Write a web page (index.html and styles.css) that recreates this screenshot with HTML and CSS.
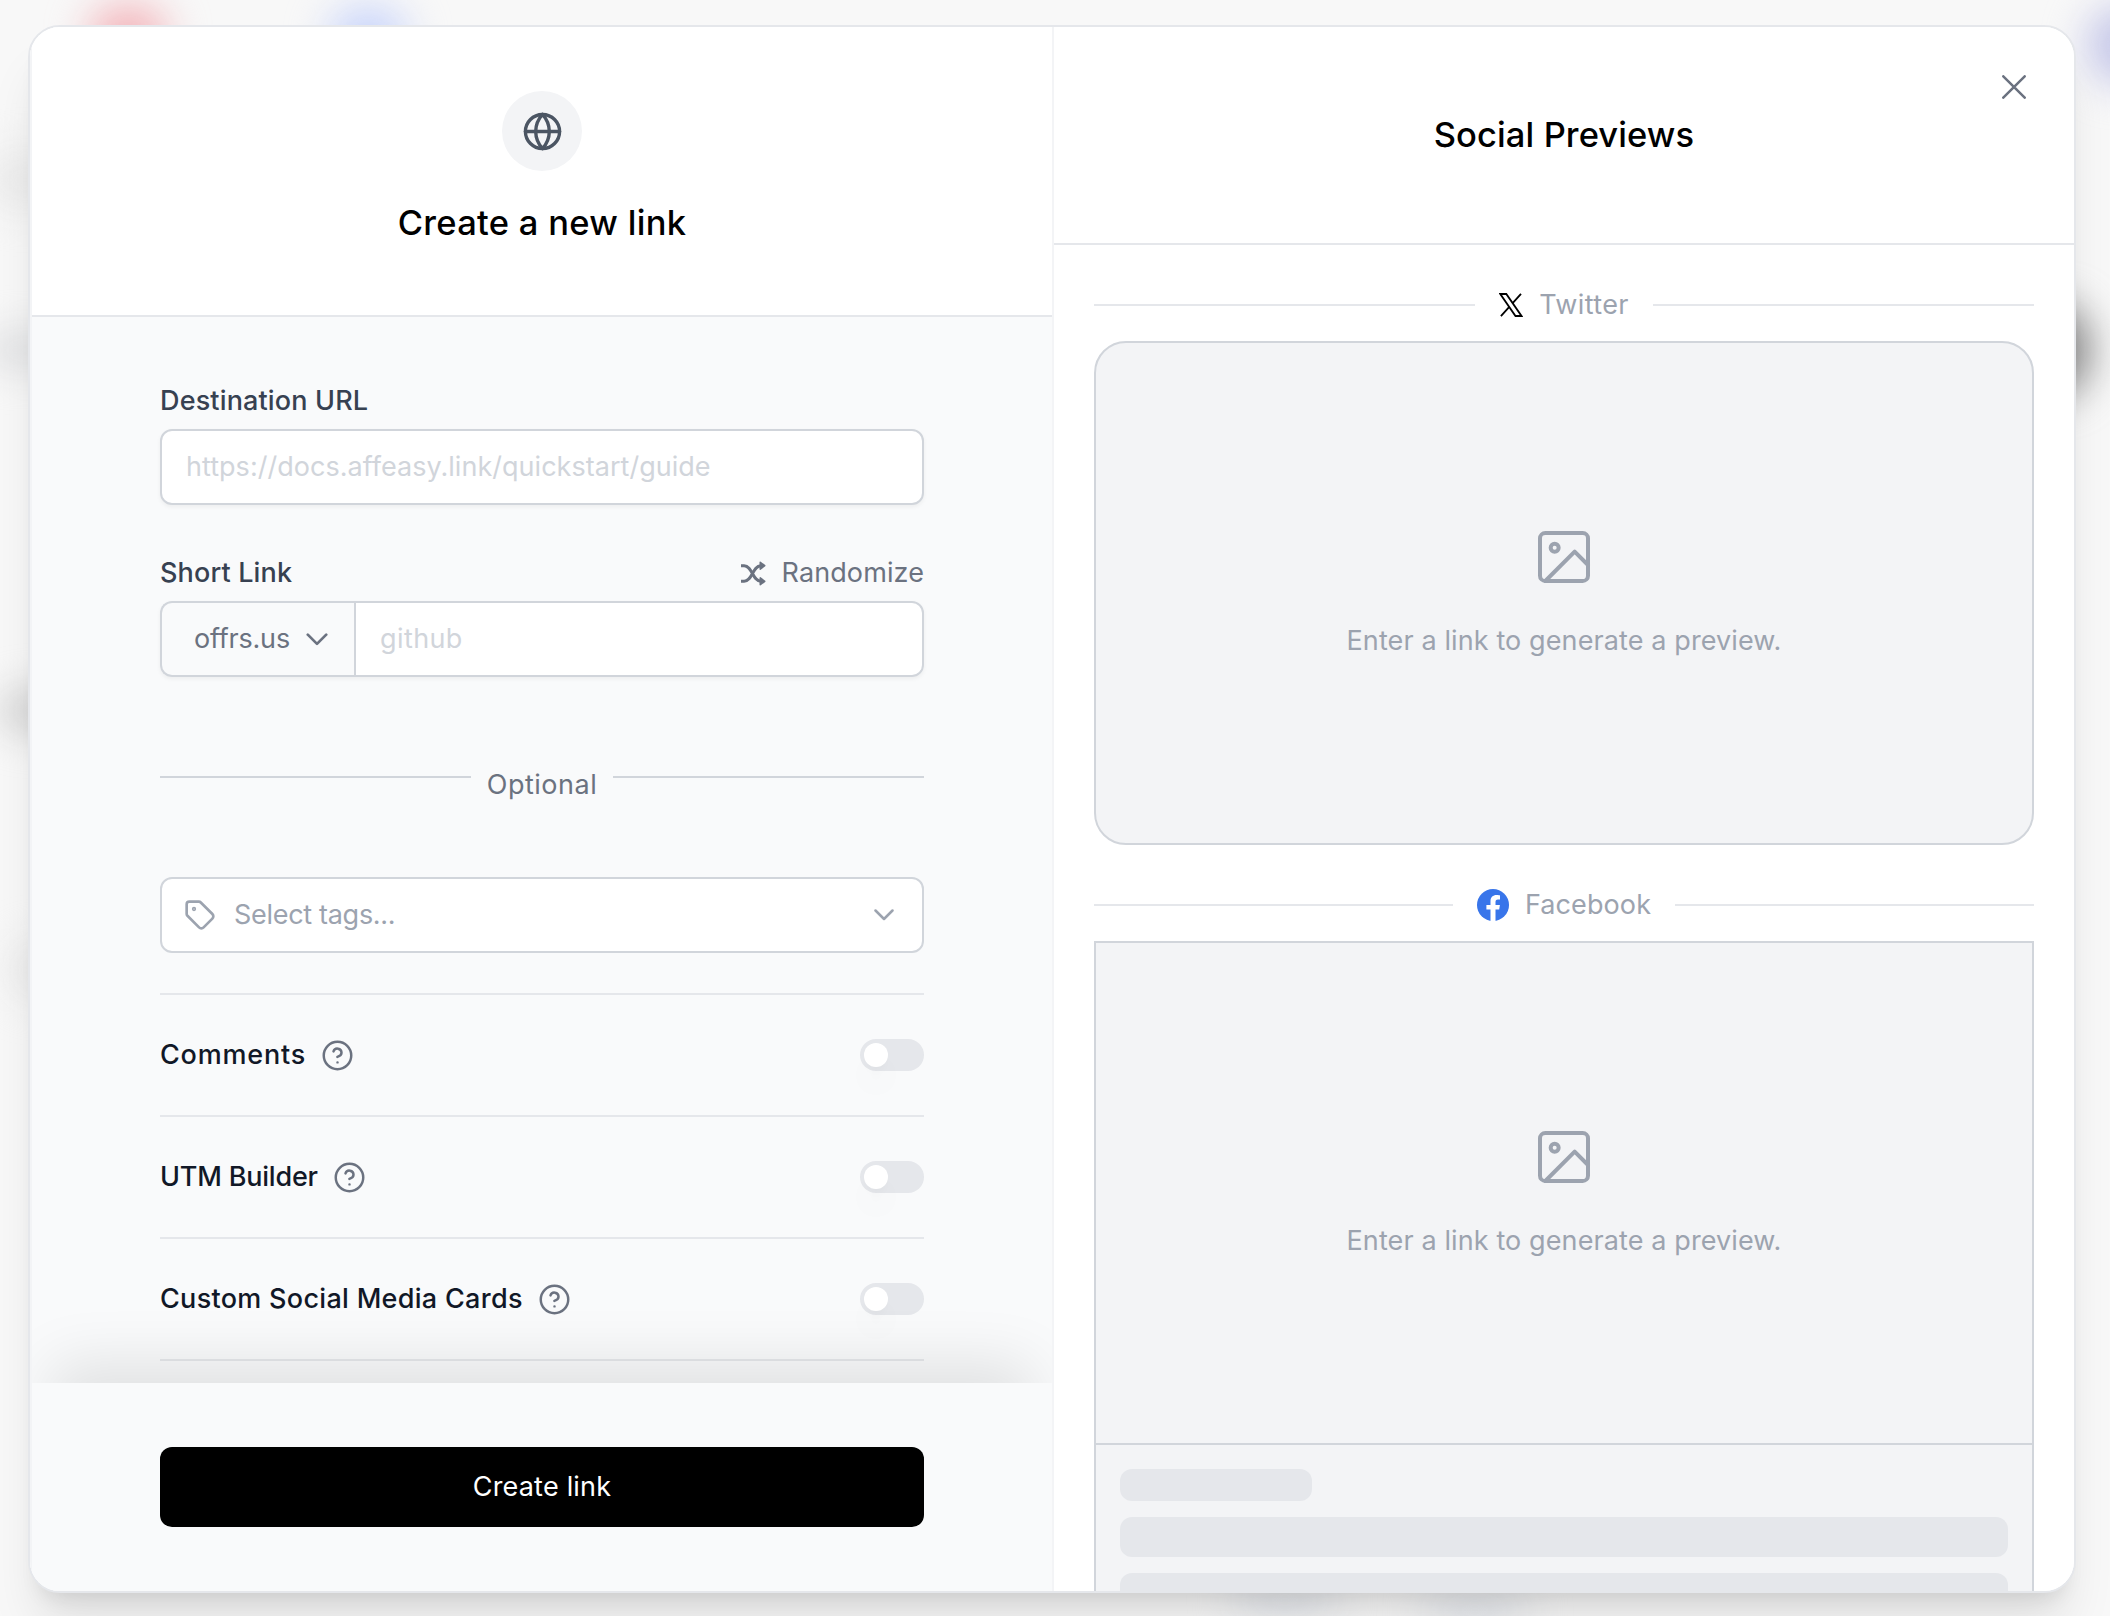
FILE: index.html
```html
<!DOCTYPE html>
<html lang="en">
<head>
<meta charset="utf-8">
<title>Create a new link</title>
<link rel="stylesheet" href="styles.css">
</head>
<body>
<div class="backdrop" aria-hidden="true">
  <i class="blob blob-red"></i><i class="blob blob-blue"></i><i class="blob blob-gray-1"></i><i class="blob blob-gray-2"></i><i class="blob blob-gray-3"></i><i class="blob blob-gray-4"></i><i class="blob blob-lavender"></i><i class="blob blob-dark"></i><i class="blob blob-slate-1"></i><i class="blob blob-slate-2"></i>
</div>
<main class="modal">
  <section class="pane form-pane">
    <header class="form-header">
      <div class="logo"><svg class="icon-globe" viewBox="0 0 24 24"><circle cx="12" cy="12" r="10"/><path d="M2 12h20M12 2a15.3 15.3 0 0 1 4 10 15.3 15.3 0 0 1-4 10 15.3 15.3 0 0 1-4-10 15.3 15.3 0 0 1 4-10z"/></svg></div>
      <h1 class="title title-create">Create a new link</h1>
    </header>
    <div class="form-body">
      <div class="field">
        <div class="label-row"><label class="label label-url" for="url">Destination URL</label></div>
        <input class="input" id="url" type="text" placeholder="https://docs.affeasy.link/quickstart/guide">
      </div>
      <div class="field">
        <div class="label-row">
          <label class="label label-short" for="key">Short Link</label>
          <button class="randomize"><svg class="icon-shuffle" viewBox="0 0 24 24"><path d="M0 4.500h3C11 4.500 11 19.500 19 19.500M0 19.500h3C11 19.500 11 4.500 19 4.500"/><path class="arrow" d="M18.500 1.200v6.600l4.300-3.300zM18.500 16.200v6.600l4.300-3.300z"/></svg><span>Randomize</span></button>
        </div>
        <div class="input-group">
          <button class="domain"><span class="domain-name">offrs.us</span><svg class="icon-chevron" viewBox="0 0 20 12"><path d="M1.500 1.500 10 10l8.500-8.500"/></svg></button>
          <input class="input input-key" id="key" type="text" placeholder="github">
        </div>
      </div>
      <div class="divider"><span class="divider-text">Optional</span></div>
      <button class="select">
        <svg class="icon-tag" viewBox="0 0 24 24"><path d="M12.586 2.586A2 2 0 0 0 11.172 2H4a2 2 0 0 0-2 2v7.172a2 2 0 0 0 .586 1.414l8.704 8.704a2.426 2.426 0 0 0 3.420 0l6.580-6.580a2.426 2.426 0 0 0 0-3.420z"/><circle cx="7.500" cy="7.500" r=".6"/></svg>
        <span class="select-text">Select tags...</span>
        <svg class="icon-chevron-sm" viewBox="0 0 20 12"><path d="M1.500 1.500 10 10l8.500-8.500"/></svg>
      </button>
      <ul class="options">
        <li class="option"><span class="option-name opt-comments">Comments</span><svg class="icon-help" viewBox="0 0 24 24"><circle cx="12" cy="12" r="10"/><path d="M9.090 9a3 3 0 0 1 5.830 1c0 2-3 3-3 3M12 17h.01"/></svg><span class="switch"><i class="knob"></i></span></li>
        <li class="option"><span class="option-name opt-utm">UTM Builder</span><svg class="icon-help" viewBox="0 0 24 24"><circle cx="12" cy="12" r="10"/><path d="M9.090 9a3 3 0 0 1 5.830 1c0 2-3 3-3 3M12 17h.01"/></svg><span class="switch"><i class="knob"></i></span></li>
        <li class="option"><span class="option-name opt-cards">Custom Social Media Cards</span><svg class="icon-help" viewBox="0 0 24 24"><circle cx="12" cy="12" r="10"/><path d="M9.090 9a3 3 0 0 1 5.830 1c0 2-3 3-3 3M12 17h.01"/></svg><span class="switch"><i class="knob"></i></span></li>
        <li class="option"></li>
      </ul>
    </div>
    <footer class="form-footer"><button class="submit">Create link</button></footer>
  </section>
  <section class="pane preview-pane">
    <header class="preview-header"><h2 class="title title-social">Social Previews</h2></header>
    <div class="preview-body">
      <div class="network"><span class="network-name"><svg class="icon-x" viewBox="0 0 24 24"><path d="M1.300 1h6l15.200 22h-6zM22 .8l-8.800 9.900M10.500 13.600 1.900 23.200"/></svg><span class="name-twitter">Twitter</span></span></div>
      <div class="card card-twitter">
        <svg class="icon-image" viewBox="0 0 24 24"><rect x="3" y="3" width="18" height="18" rx="2"/><circle cx="8.500" cy="8.500" r="1.500"/><path d="M21 15l-5-5L5 21"/></svg>
        <p class="hint">Enter a link to generate a preview.</p>
      </div>
      <div class="network network-next"><span class="network-name"><svg class="icon-facebook" viewBox="0 0 32 32"><circle cx="16" cy="16" r="16"/><path d="M13.500 32V20.600H9.400V16h4.100v-3.600c0-4.100 2.400-6.300 6.100-6.300 1.800 0 3.400.3 3.400.3v4h-2c-2 0-2.500 1.200-2.500 2.500V16h4.400l-.7 4.600h-3.700V32z"/></svg><span class="name-facebook">Facebook</span></span></div>
      <div class="card card-facebook">
        <svg class="icon-image" viewBox="0 0 24 24"><rect x="3" y="3" width="18" height="18" rx="2"/><circle cx="8.500" cy="8.500" r="1.500"/><path d="M21 15l-5-5L5 21"/></svg>
        <p class="hint">Enter a link to generate a preview.</p>
      </div>
      <div class="skeleton"><i class="bar bar-short"></i><i class="bar"></i><i class="bar"></i></div>
    </div>
  </section>
  <button class="close" aria-label="Close"><svg class="icon-close" viewBox="0 0 24 24"><path d="M1.300 1.300l21.400 21.400M22.700 1.300 1.300 22.700"/></svg></button>
</main>
</body>
</html>
```
FILE: styles.css
```css
* { box-sizing: border-box; margin: 0; padding: 0; }
body {
  width: 2110px; height: 1616px; padding: 25px 34px 23px 28px; overflow: hidden;
  background: #f8f8f8; color: #6b7280;
  font: 400 27px/40px Inter, "Liberation Sans", sans-serif;
}
button, input { font: inherit; letter-spacing: inherit; color: inherit; border: 0; background: none; outline: 0; }
svg { display: block; flex: none; fill: none; stroke: currentColor; stroke-width: 2; stroke-linecap: round; stroke-linejoin: round; }

/* Page content showing through the blurred overlay */
.backdrop { position: absolute; inset: 0; overflow: hidden; }
.blob { position: absolute; border-radius: 50%; filter: blur(20px); }
.blob-red { left: 88px; top: 4px; width: 80px; height: 66px; background: #f3b4ba; }
.blob-blue { left: 328px; top: 6px; width: 80px; height: 66px; background: #c8d4fb; }
.blob-gray-1 { left: -20px; top: 150px; width: 90px; height: 60px; background: #ebebeb; }
.blob-gray-2 { left: -20px; top: 332px; width: 90px; height: 36px; background: #dcdddf; }
.blob-gray-3 { left: -5px; top: 690px; width: 90px; height: 42px; background: #cfcfcf; }
.blob-gray-4 { left: 10px; top: 940px; width: 60px; height: 60px; background: #e8e8e8; }
.blob-lavender { left: 2086px; top: 5px; width: 80px; height: 80px; background: #c4c6e8; }
.blob-dark { left: 2016px; top: 304px; width: 74px; height: 92px; background: #858585; }
.blob-slate-1 { left: 1230px; top: 1580px; width: 110px; height: 40px; background: #e2e5ea; }
.blob-slate-2 { left: 1420px; top: 1590px; width: 110px; height: 40px; background: #e2e5ea; }

.modal {
  position: relative; width: 2048px; height: 1568px; display: grid; grid-template-columns: 1fr 1fr;
  overflow: hidden; border: 2px solid #e5e7eb; border-radius: 32px; background: #fff;
  box-shadow: 0 40px 50px -10px rgba(0,0,0,.1), 0 16px 20px -12px rgba(0,0,0,.1);
}
.pane { display: flex; flex-direction: column; min-width: 0; min-height: 0; height: 1564px; border-left: 2px solid #f3f4f6; overflow: hidden; }
.title { font-size: 34.5px; line-height: 56px; font-weight: 500; color: #000; }
.title-create { letter-spacing: .3px; }
.title-social { letter-spacing: .1px; }

.form-pane { background: #f9fafb; }
.form-header { flex: none; height: 290px; padding-top: 64px; display: flex; flex-direction: column; align-items: center; gap: 24px; background: #fff; border-bottom: 2px solid #e5e7eb; }
.logo { width: 80px; height: 80px; display: grid; place-items: center; border-radius: 50%; background: #f3f4f6; color: #4b5563; }
.icon-globe { width: 41px; height: 41px; }
.form-body { flex: 1; min-height: 0; overflow: hidden; padding: 64px 128px 0; }
.field { margin-bottom: 48px; }
.label-row { display: flex; align-items: center; justify-content: space-between; height: 40px; margin-bottom: 8px; }
.label { font-weight: 500; color: #374151; letter-spacing: .15px; }
.randomize { display: flex; align-items: center; gap: 16px; letter-spacing: .1px; }
.icon-shuffle { width: 25px; height: 25px; stroke-width: 2.800; stroke-linecap: butt; }
.icon-shuffle .arrow { fill: currentColor; stroke-width: 1.500; }
.input { display: block; width: 100%; height: 76px; padding: 0 24px 2px; border: 2px solid #d1d5db; border-radius: 12px; background: #fff; box-shadow: 0 2px 4px rgba(0,0,0,.05); letter-spacing: .03px; }
.input::placeholder { color: #d1d5db; opacity: 1; }
.input-group { display: flex; border-radius: 12px; box-shadow: 0 2px 4px rgba(0,0,0,.05); }
.domain { flex: none; width: 194px; height: 76px; display: flex; align-items: center; justify-content: space-between; padding: 0 26px 0 32px; border: 2px solid #d1d5db; border-right: 0; border-radius: 12px 0 0 12px; }
.domain-name { letter-spacing: -.2px; }
.input-key { flex: 1; width: auto; min-width: 0; border-radius: 0 12px 12px 0; box-shadow: none; letter-spacing: .4px; }
.icon-chevron { width: 22px; height: 13px; stroke-width: 2.500; }
.divider { display: flex; justify-content: center; gap: 16px; height: 40px; margin: 87px 0 73px; }
.divider::before, .divider::after { content: ""; flex: 1; height: 2px; margin-top: 12px; background: #d1d5db; }
.divider-text { padding-top: 1px; letter-spacing: .5px; }
.select { width: 100%; height: 76px; display: flex; align-items: center; padding: 0 28px 0 22px; border: 2px solid #d1d5db; border-radius: 12px; background: #fff; color: #9ca3af; }
.icon-tag { width: 32px; height: 32px; stroke-width: 2; }
.select-text { flex: 1; margin-left: 18px; text-align: left; letter-spacing: -.3px; }
.icon-chevron-sm { width: 20px; height: 12px; stroke-width: 2.500; }
.options { margin-top: 40px; list-style: none; }
.option { display: flex; align-items: center; height: 122px; border-top: 2px solid #e5e7eb; }
.option-name { margin-right: 15px; font-weight: 500; color: #111827; }
.opt-comments { letter-spacing: .8px; }
.opt-utm { letter-spacing: -.2px; }
.opt-cards { letter-spacing: .3px; }
.icon-help { width: 33px; height: 33px; stroke-width: 1.800; }
.switch { width: 64px; height: 32px; margin-left: auto; padding: 4px; border-radius: 16px; background: #e5e7eb; }
.knob { display: block; width: 24px; height: 24px; border-radius: 50%; background: #fff; box-shadow: 0 20px 30px -6px rgba(0,0,0,.1), 0 8px 12px -8px rgba(0,0,0,.1); }
.form-footer { position: relative; flex: none; height: 208px; padding: 64px 128px; background: #f9fafb; box-shadow: 0 -40px 60px -20px rgba(0,0,0,.1); }
.submit { width: 100%; height: 80px; border-radius: 12px; background: #000; color: #fff; letter-spacing: .2px; }

.preview-pane { background: #fff; }
.preview-header { flex: none; height: 218px; padding-top: 80px; border-bottom: 2px solid #e5e7eb; text-align: center; }
.preview-body { flex: 1; min-height: 0; overflow: hidden; padding: 40px 40px 0; color: #9ca3af; }
.network { display: flex; align-items: center; gap: 24px; height: 40px; margin-bottom: 16px; }
.network::before, .network::after { content: ""; flex: 1; height: 2px; background: #e5e7eb; }
.network-next { margin-top: 40px; }
.network-name { display: flex; align-items: center; gap: 16px; }
.name-twitter { letter-spacing: .35px; }
.name-facebook { letter-spacing: .1px; }
.icon-x { width: 24px; height: 24px; color: #000; stroke-width: 1.800; stroke-linecap: butt; stroke-linejoin: miter; }
.icon-facebook { width: 32px; height: 32px; stroke: none; }
.icon-facebook circle { fill: #3875ea; }
.icon-facebook path { fill: #fff; }
.card { height: 504px; display: flex; flex-direction: column; align-items: center; justify-content: center; gap: 32px; border: 2px solid #d1d5db; background: #f3f4f6; }
.card-twitter { border-radius: 32px; }
.hint { letter-spacing: .11px; }
.icon-image { width: 64px; height: 64px; stroke-width: 1.500; }
.skeleton { display: flex; flex-direction: column; gap: 16px; padding: 24px; border: 2px solid #d1d5db; border-top: 0; background: #f3f4f6; }
.bar { flex: none; height: 40px; border-radius: 12px; background: #e5e7eb; }
.bar-short { width: 192px; height: 32px; }
.close { position: absolute; top: 48px; right: 48px; display: grid; }
.icon-close { width: 24px; height: 24px; color: #6b7280; stroke-width: 2.500; }
```
